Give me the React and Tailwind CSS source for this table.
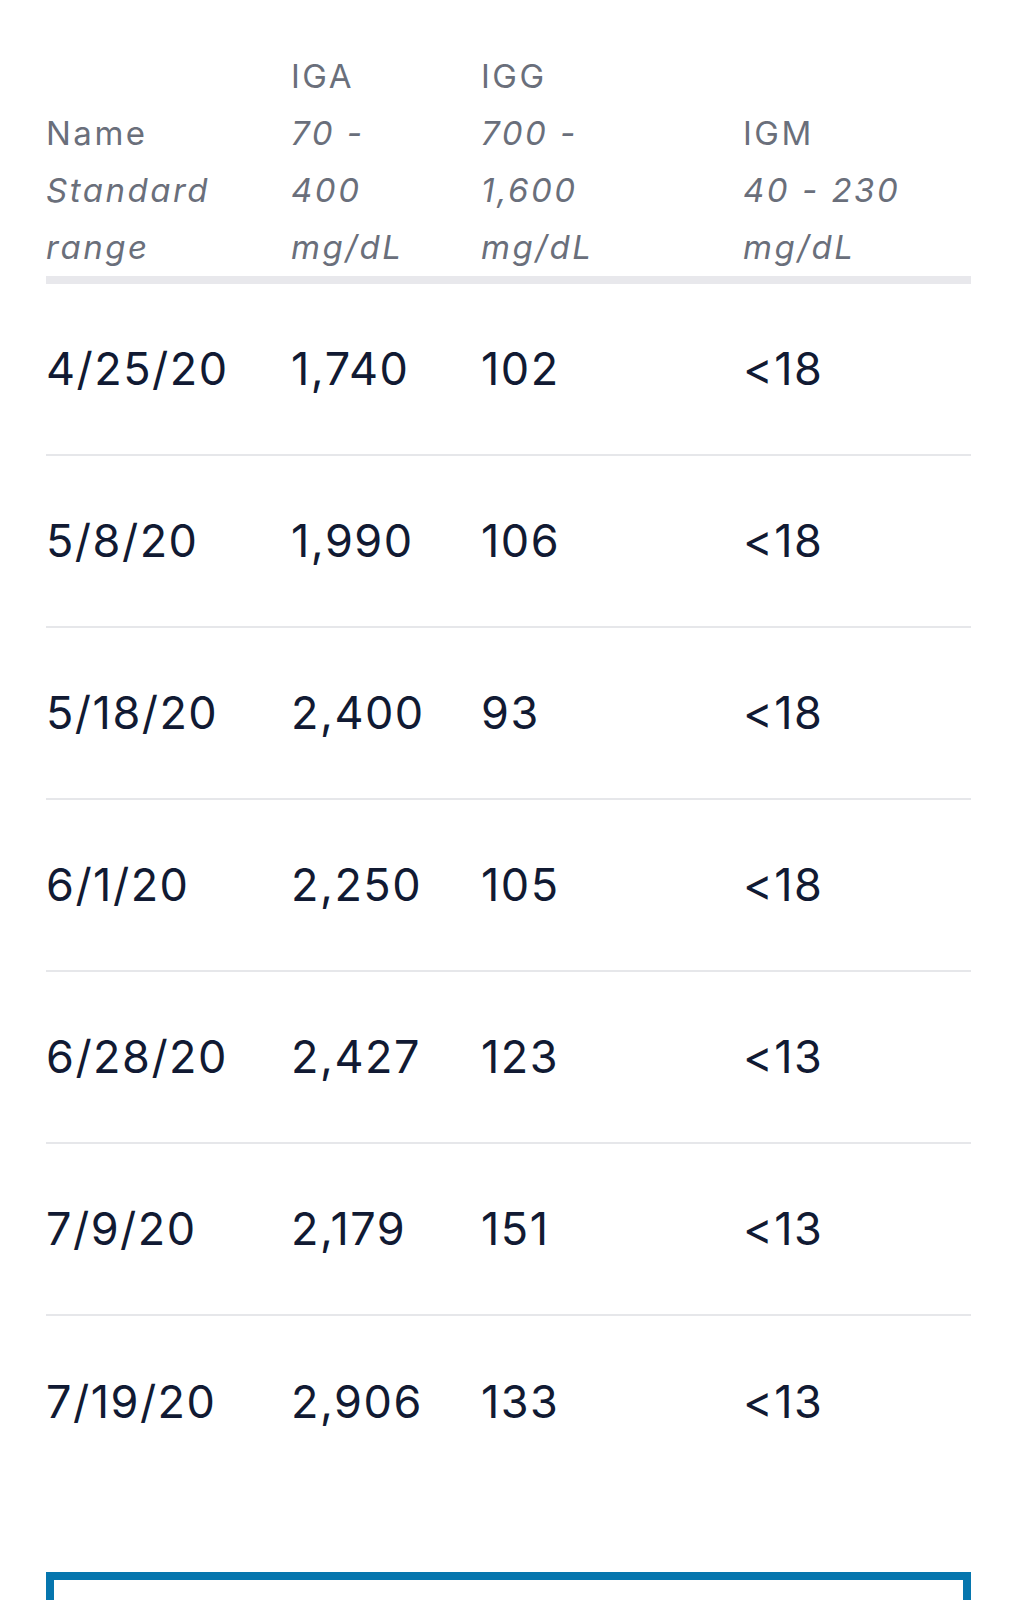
import React from "react";

const rows = [
  ["4/25/20", "1,740", "102", "<18"],
  ["5/8/20", "1,990", "106", "<18"],
  ["5/18/20", "2,400", "93", "<18"],
  ["6/1/20", "2,250", "105", "<18"],
  ["6/28/20", "2,427", "123", "<13"],
  ["7/9/20", "2,179", "151", "<13"],
  ["7/19/20", "2,906", "133", "<13"],
];

const cols = "grid grid-cols-[245px_190px_262px_228px]";

export default function App() {
  return (
    <div className="min-h-[1600px] bg-white px-[46px] pt-[48px] font-['Inter','Noto_Sans',sans-serif]">
      <div className={`${cols} items-end border-b-[8px] border-[#e8e8ec] text-[33px] leading-[57px] tracking-[2.5px] text-[#6a6f7b]`}>
        <div>
          <div>Name</div>
          <div className="italic">Standard</div>
          <div className="italic">range</div>
        </div>
        <div>
          <div>IGA</div>
          <div className="italic">70 -</div>
          <div className="italic">400</div>
          <div className="italic">mg/dL</div>
        </div>
        <div>
          <div>IGG</div>
          <div className="italic">700 -</div>
          <div className="italic">1,600</div>
          <div className="italic">mg/dL</div>
        </div>
        <div>
          <div>IGM</div>
          <div className="italic">40 - 230</div>
          <div className="italic">mg/dL</div>
        </div>
      </div>
      <div>
        {rows.map((r, i) => (
          <div
            key={i}
            className={`${cols} h-[172px] items-center text-[45px] tracking-[1.5px] text-[#111a33] ${
              i < rows.length - 1 ? "border-b-2 border-[#e6e7ea]" : ""
            }`}
          >
            {r.map((c, j) => (
              <div key={j}>{c}</div>
            ))}
          </div>
        ))}
      </div>
      <div className="mt-[84px] h-[200px] border-[8px] border-[#0676ae] bg-white" />
    </div>
  );
}
